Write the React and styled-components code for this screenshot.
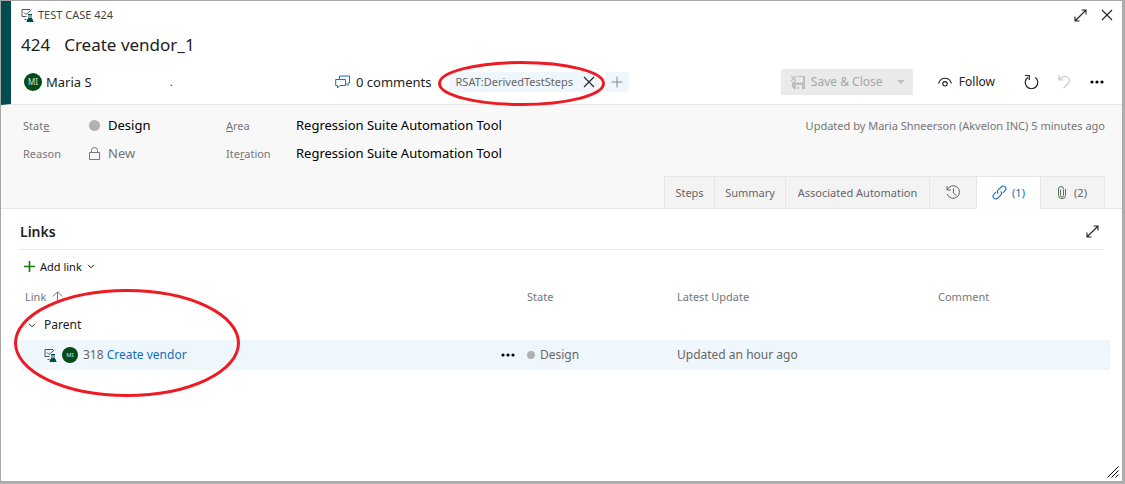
import React from "react";
import styled, { createGlobalStyle, css } from "styled-components";

const GlobalStyle = createGlobalStyle`
  *, *::before, *::after { box-sizing: border-box; }
  html, body { margin: 0; }
  body {
    background: #b0b0b0;
    font-family: "Noto Sans", "Open Sans", sans-serif;
    font-size: 13px;
    line-height: 20px;
    color: #000;
  }
  h1, h2, p, dl, dd { margin: 0; font-weight: 400; }
  button { font: inherit; color: inherit; border: 0; padding: 0; background: none; cursor: pointer; }
  svg { display: block; flex: none; }
`;

/* ---------- icons ---------- */

const Svg = ({ w, h = w, children, ...rest }) => (
  <svg width={w} height={h} viewBox={`0 0 ${w} ${h}`} fill="none" stroke="currentColor" aria-hidden="true" {...rest}>
    {children}
  </svg>
);

const TestCaseIcon = () => (
  <Svg w={13} color="#004b50">
    <path d="M9 .5H1v7h4.5M3 3.5l2 2L10.5.8M3.500 10.500h2" stroke="#555" />
    <path d="M7 5.5h4M8 5.5v3l-2 4h6l-2-4v-3z" />
    <path d="M7.5 9.5h3l1.5 3H6z" fill="currentColor" />
  </Svg>
);
const ExpandIcon = () => (
  <Svg w={13}>
    <path d="M1 12L12 1M7.5 1H12v4.5M1 7.5V12h4.5" strokeWidth="1.1" />
  </Svg>
);
const CloseIcon = () => (
  <Svg w={12}>
    <path d="M1 1l10 10M11 1L1 11" strokeWidth="1.1" />
  </Svg>
);
const CommentsIcon = () => (
  <Svg w={15} h={14} color="#0078d4">
    <path d="M4.5 4V1h10v7H13v2.5L11 8.3" />
    <path d="M.7 4.5h9.8v6H5L2.5 13v-2.5H.7z" />
  </Svg>
);
const PlusIcon = () => (
  <Svg w={12}>
    <path d="M6 0.5v11M.5 6h11" />
  </Svg>
);
const AddIcon = () => (
  <Svg w={11} color="#107c10">
    <path d="M5.5 0v11M0 5.5h11" strokeWidth="1.6" />
  </Svg>
);
const SaveIcon = () => (
  <Svg w={14}>
    <path d="M0 1l5 5M5 1L0 6" strokeWidth="1.2" />
    <path d="M6.5 1H14v13H3L1 12V7.5l1.7-1.3 2 1.3H12V2H6.5zM5 10v4h1.5v-2.5H8V14h3v-4z" fill="currentColor" stroke="none" fillRule="evenodd" />
  </Svg>
);
const CaretIcon = () => (
  <Svg w={8} h={4}>
    <path d="M0 0h8L4 4z" fill="currentColor" stroke="none" />
  </Svg>
);
const EyeIcon = () => (
  <Svg w={14} h={11}>
    <path d="M.6 6.5C1.5 3.2 4 1.2 7 1.2s5.5 2 6.4 5.3" strokeWidth="1.1" />
    <circle cx="7" cy="6.8" r="2.2" strokeWidth="1.1" />
  </Svg>
);
const RefreshIcon = () => (
  <Svg w={15} h={16}>
    <path d="M4 3.2A6.3 6.3 0 1 0 11.3 3.4M1 1.5h4.3V6" strokeWidth="1.2" />
  </Svg>
);
const UndoIcon = () => (
  <Svg w={12} h={14}>
    <path d="M1 .5v4.5h4.5M1.2 4.8C3 2.5 5 1.5 7 1.5c2.5 0 4.3 1.8 4.3 4 0 1.2-.5 2.2-1.3 3L5.5 13.2" strokeWidth="1.2" />
  </Svg>
);
const DotsIcon = () => (
  <Svg w={14} h={4}>
    <g fill="currentColor" stroke="none">
      <circle cx="2" cy="2" r="1.6" />
      <circle cx="7" cy="2" r="1.6" />
      <circle cx="12" cy="2" r="1.6" />
    </g>
  </Svg>
);
const LockIcon = () => (
  <Svg w={11} h={13}>
    <path d="M.5 5.5h10v7H.5zM2.5 5.5v-2a3 3 0 0 1 6 0v2" />
  </Svg>
);
const HistoryIcon = () => (
  <Svg w={15}>
    <path d="M1 1v4h4M1.3 4.8A6.3 6.3 0 1 1 1.2 9M7.5 3.5V8l3 2.8" />
  </Svg>
);
const ChainIcon = () => (
  <Svg w={15}>
    <path d="M6.3 8.7a2.7 2.7 0 0 1 0-3.8L9.5 1.7a2.7 2.7 0 0 1 3.8 3.8L11 7.8M8.7 6.3a2.7 2.7 0 0 1 0 3.8L5.5 13.3a2.7 2.7 0 0 1-3.8-3.8L4 7.2" strokeWidth="1.1" />
  </Svg>
);
const ClipIcon = () => (
  <Svg w={8} h={13} color="#5c6b5c">
    <path d="M5.5 3.5v6a1.5 1.5 0 0 1-3 0v-6M7.5 3v6.5a3.3 3 0 0 1-7 0V3a2.5 2.5 0 0 1 5 0" />
  </Svg>
);
const ChevronIcon = () => (
  <Svg w={8} h={5}>
    <path d="M1 .8l3 3 3-3" />
  </Svg>
);
const SortUpIcon = () => (
  <Svg w={11} h={12}>
    <path d="M5.5 12V1M.8 5.5L5.5.8l4.7 4.7" />
  </Svg>
);
const GripIcon = () => (
  <Svg w={12}>
    <path d="M.5 11.5l11-11M4.5 11.5l7-7M8.5 11.5l3-3" />
  </Svg>
);

/* ---------- frame ---------- */

const Dialog = styled.main`
  display: flex;
  flex-direction: column;
  min-height: calc(100vh - 2px);
  margin: 0 2px 2px 0;
  border: 1px solid #a6a6a6;
  background: #fff;
`;

const Header = styled.header`
  display: flex;
  flex-direction: column;
  border-left: 10px solid #004b50;
  border-bottom: 1px solid #e6e6e6;
  padding: 4px 7px 5px 10px;
`;

const Bar = styled.div`
  display: flex;
  align-items: center;
  justify-content: space-between;
  min-height: ${(p) => p.$height}px;
`;

const Cluster = styled.div`
  display: flex;
  align-items: center;
  gap: ${(p) => p.$gap}px;
`;

const Kind = styled.p`
  display: flex;
  align-items: center;
  gap: 4px;
  font-size: 11px;
  color: #444;
`;

const Title = styled.h1`
  display: flex;
  gap: 14px;
  font-size: 17px;
  line-height: 24px;
  color: #212121;
`;

const IconButton = styled.button`
  display: grid;
  place-items: center;
  width: ${(p) => p.$width || 16}px;
  height: 20px;
  color: ${(p) => p.$color || "#222"};
`;

const ActionBar = styled.div`
  display: grid;
  grid-template-columns: 311px auto 1fr auto;
  align-items: center;
  min-height: 34px;
  padding: 0 10px 0 3px;
`;

const Assignee = styled.div`
  display: flex;
  align-items: center;
  gap: 4px;
  color: #222;
`;

const Speck = styled.span`
  margin-left: 74px;
  font-size: 11px;
`;

const Avatar = styled.span`
  display: grid;
  place-items: center;
  flex: none;
  width: ${(p) => p.$size}px;
  height: ${(p) => p.$size}px;
  border-radius: 50%;
  background: #044b1c;
  color: #d5e5d8;
  font-size: ${(p) => (p.$size > 16 ? 8 : 6)}px;
  line-height: 1;
`;

const CommentsButton = styled.button`
  display: flex;
  align-items: center;
  gap: 6px;
  color: #222;
`;

const Tags = styled.div`
  display: flex;
  align-items: center;
  gap: 6px;
  margin-left: 18px;
`;

const Tag = styled.span`
  position: relative;
  display: flex;
  align-items: center;
  gap: 10px;
  height: 20px;
  padding: 0 4px 0 6px;
  background: #eff6fc;
  font-size: 11px;
  color: #666;
`;

const AddTag = styled.button`
  display: grid;
  place-items: center;
  width: 24px;
  height: 20px;
  background: #eff6fc;
  color: #8a8a8a;
`;

const SaveButton = styled.button`
  display: flex;
  align-items: center;
  width: 132px;
  height: 26px;
  padding: 0 8px 0 10px;
  gap: 6px;
  background: #eaeaea;
  color: #a6a6a6;
  font-size: 12px;

  svg:last-child { margin-left: auto; }
  svg { color: #bdbdbd; }
`;

const FollowButton = styled.button`
  display: flex;
  align-items: center;
  gap: 7px;
  margin: 0 28px 0 25px;
  font-size: 12px;
  color: #222;
`;

/* ---------- details ---------- */

const Details = styled.section`
  display: flex;
  flex-direction: column;
  gap: 9px;
  padding: 6px 17px 0 22px;
  border-bottom: 1px solid #e6e6e6;
  background: #f8f8f8;
`;

const DetailsTop = styled.div`
  display: flex;
  justify-content: space-between;
  align-items: flex-start;
`;

const Fields = styled.dl`
  display: grid;
  grid-template-columns: 66px 137px 70px auto;
  grid-auto-rows: 28px;
  align-items: center;
`;

const Label = styled.dt`
  padding-top: 2px;
  font-size: 11px;
  color: #767676;
`;

const Value = styled.dd`
  display: flex;
  align-items: center;
  gap: 8px;
  color: ${(p) => (p.$muted ? "#767676" : "#000")};
`;

const StateDot = styled.span`
  width: ${(p) => p.$size}px;
  height: ${(p) => p.$size}px;
  border-radius: 50%;
  background: #b2b2b2;
`;

const Updated = styled.p`
  padding-top: 5px;
  font-size: 11px;
  color: #767676;
`;

const Tabs = styled.div`
  display: flex;
  align-self: flex-end;
  margin-bottom: -1px;
  border-right: 1px solid #e6e6e6;
`;

const Tab = styled.button`
  display: flex;
  align-items: center;
  justify-content: center;
  gap: ${(p) => p.$gap || 5}px;
  width: ${(p) => p.$width}px;
  height: 33px;
  border: solid #e6e6e6;
  border-width: 1px 0 1px 1px;
  background: #f3f3f3;
  font-size: 11px;
  color: #666;

  ${(p) =>
    p.$active &&
    css`
      background: #fff;
      border-bottom-color: #fff;
      color: #106ebe;
    `}
`;

/* ---------- links ---------- */

const Links = styled.section`
  flex: 1;
  padding: 0 12px 0 18px;
`;

const LinksHead = styled.div`
  display: flex;
  align-items: center;
  justify-content: space-between;
  height: 41px;
  margin-right: 6px;
  padding: 5px 4px 0 1px;
  border-bottom: 1px solid #e6e6e6;
`;

const Heading = styled.h2`
  font-size: 14px;
  font-weight: 600;
  color: #222;
`;

const AddLink = styled.button`
  display: flex;
  align-items: center;
  gap: 5px;
  height: 33px;
  padding-left: 5px;
  font-size: 11px;
  color: #111;
`;

const Table = styled.table`
  width: calc(100% - 2px);
  margin-left: 2px;
  border-collapse: collapse;
  table-layout: fixed;
  color: #666;
`;

const HeadCell = styled.th`
  width: ${(p) => p.$width || "auto"};
  height: 27px;
  padding: 0 0 0 ${(p) => p.$indent || 0}px;
  text-align: left;
  font-size: 11px;
  font-weight: 400;
  color: #767676;
`;

const GroupCell = styled.th`
  height: 30px;
  padding: 0 0 0 7px;
  text-align: left;
  font-size: 12px;
  font-weight: 400;
  color: #222;
`;

const LinkRow = styled.tr`
  background: #eff6fc;
`;

const Cell = styled.td`
  height: 30px;
  padding: 0 0 0 ${(p) => p.$indent || 0}px;
  font-size: 12px;
`;

const LinkAnchor = styled.a`
  color: #106ebe;
  text-decoration: none;
`;

const RowMenu = styled(IconButton)`
  margin: 0 11px 0 auto;
`;

const Footer = styled.footer`
  display: flex;
  justify-content: flex-end;
  padding: 0 3px 3px;
`;

/* Hand-drawn style highlight laid over the content it marks */
const Marker = styled.svg`
  position: absolute;
  left: ${(p) => p.$left}px;
  top: ${(p) => p.$top}px;
  overflow: visible;
  pointer-events: none;
`;

const MarkedArea = styled.div`
  position: relative;
`;

const Ring = ({ width, height, left, top }) => (
  <Marker width={width} height={height} $left={left} $top={top} aria-hidden="true">
    <ellipse
      cx={width / 2}
      cy={height / 2}
      rx={width / 2 - 1.5}
      ry={height / 2 - 1.5}
      fill="none"
      stroke="#ed1c24"
      strokeWidth="3"
    />
  </Marker>
);

export default function App() {
  return (
    <>
      <GlobalStyle />
      <Dialog>
        <Header>
          <Bar $height={20}>
            <Kind>
              <TestCaseIcon />
              TEST CASE 424
            </Kind>
            <Cluster $gap={11}>
              <IconButton aria-label="Full screen"><ExpandIcon /></IconButton>
              <IconButton aria-label="Close"><CloseIcon /></IconButton>
            </Cluster>
          </Bar>
          <Bar $height={40}>
            <Title><span>424</span><span>Create vendor_1</span></Title>
          </Bar>
          <ActionBar>
            <Assignee>
              <Avatar $size={18}>MI</Avatar>
              <span>Maria S</span>
              <Speck>.</Speck>
            </Assignee>
            <CommentsButton><CommentsIcon />0 comments</CommentsButton>
            <Tags>
              <Tag>
                RSAT:DerivedTestSteps
                <IconButton $width={12} aria-label="Remove tag"><CloseIcon /></IconButton>
                <Ring width={167} height={45} left={-12} top={-11} />
              </Tag>
              <AddTag aria-label="Add tag"><PlusIcon /></AddTag>
            </Tags>
            <Cluster $gap={0}>
              <SaveButton disabled><SaveIcon />Save &amp; Close<CaretIcon /></SaveButton>
              <FollowButton><EyeIcon />Follow</FollowButton>
              <Cluster $gap={17}>
                <IconButton aria-label="Refresh"><RefreshIcon /></IconButton>
                <IconButton aria-label="Undo" $color="#c8c8c8"><UndoIcon /></IconButton>
                <IconButton aria-label="More actions" $color="#000"><DotsIcon /></IconButton>
              </Cluster>
            </Cluster>
          </ActionBar>
        </Header>

        <Details>
          <DetailsTop>
            <Fields>
              <Label>Stat<u>e</u></Label>
              <Value><StateDot $size={11} />Design</Value>
              <Label><u>A</u>rea</Label>
              <Value>Regression Suite Automation Tool</Value>
              <Label>Reason</Label>
              <Value $muted><LockIcon />New</Value>
              <Label>Ite<u>r</u>ation</Label>
              <Value>Regression Suite Automation Tool</Value>
            </Fields>
            <Updated>Updated by Maria Shneerson (Akvelon INC) 5 minutes ago</Updated>
          </DetailsTop>
          <Tabs role="tablist">
            <Tab role="tab" $width={50}>Steps</Tab>
            <Tab role="tab" $width={71}>Summary</Tab>
            <Tab role="tab" $width={144}>Associated Automation</Tab>
            <Tab role="tab" $width={47} aria-label="History"><HistoryIcon /></Tab>
            <Tab role="tab" $width={64} $active aria-selected="true"><ChainIcon />(1)</Tab>
            <Tab role="tab" $width={64} $gap={8}><ClipIcon />(2)</Tab>
          </Tabs>
        </Details>

        <Links>
          <LinksHead>
            <Heading>Links</Heading>
            <IconButton aria-label="Expand links"><ExpandIcon /></IconButton>
          </LinksHead>
          <AddLink><AddIcon />Add link<ChevronIcon /></AddLink>
          <MarkedArea>
            <Table>
              <thead>
                <tr>
                  <HeadCell $width="506px" $indent={4}>
                    <Cluster $gap={6}>Link<SortUpIcon /></Cluster>
                  </HeadCell>
                  <HeadCell $width="150px">State</HeadCell>
                  <HeadCell $width="261px">Latest Update</HeadCell>
                  <HeadCell>Comment</HeadCell>
                </tr>
              </thead>
              <tbody>
                <tr>
                  <GroupCell colSpan={4}>
                    <Cluster $gap={8}><ChevronIcon />Parent</Cluster>
                  </GroupCell>
                </tr>
                <LinkRow>
                  <Cell $indent={23}>
                    <Cluster $gap={5}>
                      <TestCaseIcon />
                      <Avatar $size={16}>MI</Avatar>
                      <span>318 <LinkAnchor href="#318">Create vendor</LinkAnchor></span>
                      <RowMenu aria-label="Link actions" $color="#000"><DotsIcon /></RowMenu>
                    </Cluster>
                  </Cell>
                  <Cell><Cluster $gap={5}><StateDot $size={8} />Design</Cluster></Cell>
                  <Cell>Updated an hour ago</Cell>
                  <Cell />
                </LinkRow>
              </tbody>
            </Table>
            <Ring width={226} height={108} left={-5} top={6} />
          </MarkedArea>
        </Links>
        <Footer><GripIcon /></Footer>
      </Dialog>
    </>
  );
}
